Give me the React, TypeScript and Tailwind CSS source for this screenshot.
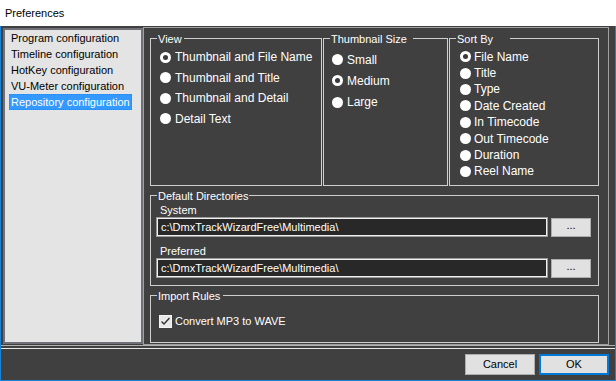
import React from "react";

function Radio({ checked }: { checked?: boolean }) {
  return (
    <span className="w-[11px] h-[11px] rounded-full bg-white flex items-center justify-center shrink-0">
      {checked && <span className="w-[5px] h-[5px] rounded-full bg-[#3a3a3a]" />}
    </span>
  );
}

function Group({
  title,
  legendClass,
  className,
  children,
}: {
  title: string;
  legendClass: string;
  className: string;
  children: React.ReactNode;
}) {
  return (
    <fieldset className={`border border-[#cfcfcf] min-w-0 ${className}`}>
      <legend className={`ml-[6px] pl-[1px] pt-[3px] text-[11px] leading-[13px] text-white ${legendClass}`}>
        {title}
      </legend>
      {children}
    </fieldset>
  );
}

function RadioItem({
  label,
  checked,
  className,
}: {
  label: string;
  checked?: boolean;
  className: string;
}) {
  return (
    <div className={`flex items-center text-[12px] text-white whitespace-nowrap ${className}`}>
      <Radio checked={checked} />
      <span>{label}</span>
    </div>
  );
}

function PathRow({ label }: { label: string }) {
  return (
    <div className="flex flex-col">
      <div className="pl-[4px] text-[11px] leading-[14px] text-white">{label}</div>
      <div className="flex items-center gap-[3px]">
        <div className="w-[392px] h-[20px] bg-[#282828] border border-[#9a9a9a] shadow-[inset_0_0_0_1px_#f0f0f0] flex items-center pl-[4px] text-[11px] text-white">
          c:\DmxTrackWizardFree\Multimedia\
        </div>
        <button className="w-[40px] h-[19px] bg-[#e1e1e1] border border-[#adadad] text-[11px] text-black leading-none pb-[3px]">
          ...
        </button>
      </div>
    </div>
  );
}

export default function App() {
  const sidebar = [
    "Program configuration",
    "Timeline configuration",
    "HotKey configuration",
    "VU-Meter configuration",
    "Repository configuration",
  ];
  return (
    <div className="w-[616px] h-[381px] flex flex-col overflow-hidden font-[family-name:'Liberation_Sans',Arial,sans-serif]">
      <div className="h-[26px] shrink-0 bg-white flex items-center pl-[5px] text-[11px] text-black">
        Preferences
      </div>
      <div className="flex-1 flex flex-col bg-[#404040] border-x border-b border-[#1883d7]">
        <div className="h-[319px] flex">
          <div className="ml-[2px] mt-[2px] w-[140px] h-[316px] bg-[#e4e4e4] border-2 border-[#6f7078] pl-[4px] flex flex-col items-start">
            {sidebar.map((s, i) =>
              i === 4 ? (
                <div
                  key={s}
                  className="h-[16px] px-[1px] flex items-center text-[11px] bg-[#3399ff] text-white border border-dotted border-[#c86400] whitespace-nowrap"
                >
                  {s}
                </div>
              ) : (
                <div key={s} className="h-[16px] px-[2px] flex items-center text-[11px] text-black whitespace-nowrap">
                  {s}
                </div>
              )
            )}
          </div>
          <div className="mt-[1px] w-[466px] h-[318px] border border-[#a0a0a0] pl-[6px] pt-[2px] flex flex-col gap-[1px]">
            <div className="flex gap-[1px]">
              <Group title="View" legendClass="pr-[2px]" className="w-[172px] h-[156px]">
                <div className="flex flex-col pl-[9px] pt-[1px]">
                  <RadioItem label="Thumbnail and File Name" checked className="h-[20.5px] gap-[4px]" />
                  <RadioItem label="Thumbnail and Title" className="h-[20.5px] gap-[4px]" />
                  <RadioItem label="Thumbnail and Detail" className="h-[20.5px] gap-[4px]" />
                  <RadioItem label="Detail Text" className="h-[20.5px] gap-[4px]" />
                </div>
              </Group>
              <Group title="Thumbnail Size" legendClass="pr-[6px]" className="w-[125px] h-[156px]">
                <div className="flex flex-col pl-[8px] pt-[3px]">
                  <RadioItem label="Small" className="h-[21.3px] gap-[4px]" />
                  <RadioItem label="Medium" checked className="h-[21.3px] gap-[4px]" />
                  <RadioItem label="Large" className="h-[21.3px] gap-[4px]" />
                </div>
              </Group>
              <Group title="Sort By" legendClass="pr-[17px]" className="w-[150px] h-[156px]">
                <div className="flex flex-col pl-[10px] pt-[2.5px]">
                  <RadioItem label="File Name" checked className="h-[16.4px] gap-[3px]" />
                  <RadioItem label="Title" className="h-[16.4px] gap-[3px]" />
                  <RadioItem label="Type" className="h-[16.4px] gap-[3px]" />
                  <RadioItem label="Date Created" className="h-[16.4px] gap-[3px]" />
                  <RadioItem label="In Timecode" className="h-[16.4px] gap-[3px]" />
                  <RadioItem label="Out Timecode" className="h-[16.4px] gap-[3px]" />
                  <RadioItem label="Duration" className="h-[16.4px] gap-[3px]" />
                  <RadioItem label="Reel Name" className="h-[16.4px] gap-[3px]" />
                </div>
              </Group>
            </div>
            <Group title="Default Directories" legendClass="pr-[1px]" className="w-[449px] h-[99px]">
              <div className="flex flex-col pl-[5px] gap-[7px]">
                <PathRow label="System" />
                <PathRow label="Preferred" />
              </div>
            </Group>
            <Group title="Import Rules" legendClass="pr-[3px]" className="w-[449px] h-[56px]">
              <div className="flex items-center pl-[8px] pt-[10px] gap-[3px]">
                <span className="w-[13px] h-[13px] bg-[#e8e8e8] border border-[#f4f4f4] flex items-center justify-center">
                  <svg width="11" height="11" viewBox="0 0 11 11">
                    <path d="M1.5 5.5 L4 8 L9.5 2" fill="none" stroke="#333" strokeWidth="1.4" />
                  </svg>
                </span>
                <span className="text-[11px] text-white">Convert MP3 to WAVE</span>
              </div>
            </Group>
          </div>
        </div>
        <div className="h-[4px] border-t border-b border-t-[#b0b0b0] border-b-[#e8e8e8]" />
        <div className="flex justify-end gap-[4px] pt-[5px] pr-[6px]">
          <button className="w-[70px] h-[21px] bg-[#e1e1e1] border border-[#adadad] text-[11px] text-black">
            Cancel
          </button>
          <button className="w-[70px] h-[21px] bg-[#e1e1e1] border-2 border-[#0078d7] text-[11px] text-black">
            OK
          </button>
        </div>
      </div>
    </div>
  );
}
